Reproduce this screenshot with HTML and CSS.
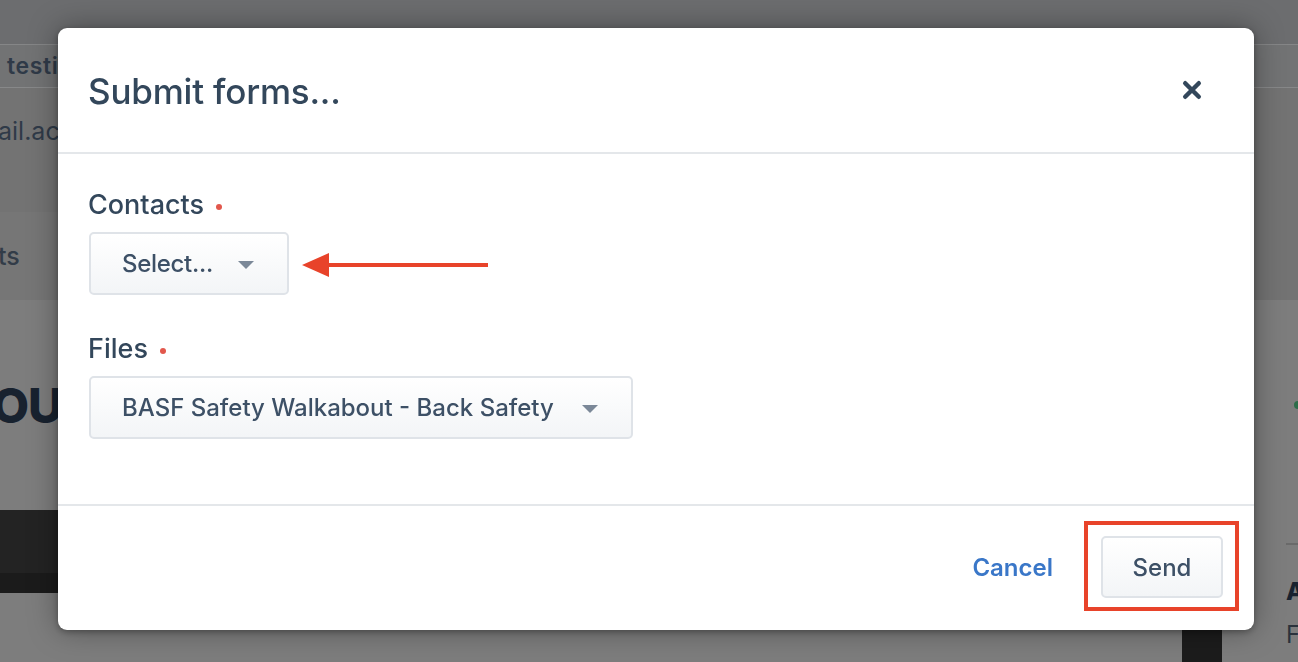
FILE: index.html
```html
<!DOCTYPE html>
<html lang="en">
<head>
<meta charset="utf-8">
<title>Submit forms</title>
<link rel="stylesheet" href="styles.css">
</head>
<body>
<div class="app">
  <div class="topbar"></div>
  <div class="tabs-row"><span class="tab-label">testing</span></div>
  <div class="info-row"><span class="info-text">ail.acme.com</span></div>
  <div class="nav-row"><div class="nav-tab">ts</div></div>
  <div class="content">
    <div class="content-head">
      <h1 class="page-title">OUT</h1>
      <span class="green-dot"></span>
    </div>
    <div class="dark-bar"></div>
    <div class="side-panel">
      <div class="side-rule"></div>
      <div class="side-title">A</div>
      <div class="side-text">F</div>
    </div>
    <div class="dark-block"></div>
  </div>
</div>

<div class="backdrop">
  <div class="modal">
    <div class="modal-header">
      <h2 class="modal-title">Submit forms...</h2>
      <button class="close-btn" aria-label="Close">
        <svg width="20" height="20" viewBox="0 0 20 20"><path d="M3.2 3.2 L16.8 16.8 M16.8 3.2 L3.2 16.8" stroke="#33475b" stroke-width="4.4" stroke-linecap="round" fill="none"/></svg>
      </button>
    </div>
    <div class="modal-body">
      <div class="field">
        <div class="field-label">Contacts<span class="req"></span></div>
        <button class="select-btn select-short">Select...<span class="caret"></span></button>
      </div>
      <div class="field">
        <div class="field-label">Files<span class="req"></span></div>
        <button class="select-btn">BASF Safety Walkabout - Back Safety<span class="caret"></span></button>
      </div>
    </div>
    <div class="modal-footer">
      <button class="link-btn">Cancel</button>
      <button class="send-btn">Send</button>
    </div>
  </div>
  <svg class="anno-arrow" width="188" height="26" viewBox="0 0 188 26"><path d="M0 13 L27 1 L27 11 L186 11 L186 15 L27 15 L27 25 Z" fill="#e8432a"/></svg>
  <div class="anno-box"></div>
</div>
</body>
</html>
```

FILE: styles.css
```css
* { box-sizing: border-box; }
html, body { margin: 0; padding: 0; }
body {
  width: 1298px;
  height: 662px;
  overflow: hidden;
  font-family: Inter, "Noto Sans", "Liberation Sans", sans-serif;
  background: #7b7b7b;
}

/* dimmed app page behind the modal */
.app { width: 1298px; height: 662px; display: flex; flex-direction: column; }
.topbar { height: 45px; background: #6c6d6f; border-bottom: 1px solid #858687; }
.tabs-row { height: 43px; background: #727374; border-bottom: 1px solid #878889; display: flex; align-items: center; padding-left: 7px; }
.tab-label { font-size: 23px; font-weight: 600; color: #2f3a48; letter-spacing: 0.6px; }
.info-row { height: 104px; background: #737373; display: flex; align-items: center; }
.info-text { font-size: 25px; color: #2f3a48; margin-left: -2px; margin-top: -18px; }
.nav-row { height: 108px; background: #737373; display: flex; align-items: flex-end; }
.nav-tab { height: 88px; width: 120px; background: #767676; border-right: 2px solid #7e7e7e; font-size: 25px; font-weight: 500; color: #323c48; display: flex; align-items: center; margin-left: -10px; padding-left: 8px; }
.content { flex: 1; background: #7d7d7d; display: flex; flex-direction: column; position: relative; }
.content-head { height: 210px; display: flex; align-items: center; justify-content: space-between; }
.page-title { margin: 0 0 0 -8px; font-size: 48px; font-weight: 800; color: #18222f; letter-spacing: -1px; }
.green-dot { width: 8px; height: 8px; border-radius: 50%; background: #2e6d4a; margin-right: -4px; }
.dark-bar { height: 83px; width: 1100px; background: #232323; border-bottom: 20px solid #1b1b1b; }
.side-panel { position: absolute; left: 1286px; top: 243px; width: 60px; }
.side-rule { height: 2px; background: #6a6a6a; }
.side-title { margin-top: 32px; font-size: 24px; font-weight: 800; color: #18222f; }
.side-text { margin-top: 14px; font-size: 24px; color: #2a323c; }
.dark-block { position: absolute; left: 1182px; top: 330px; width: 40px; height: 40px; background: #1c1c1c; }

/* modal overlay */
.backdrop {
  position: fixed;
  inset: 0;
  padding: 28px 0 0 58px;
}
.modal {
  width: 1196px;
  height: 602px;
  background: #fff;
  border-radius: 9px;
  box-shadow: 0 0 30px rgba(0,0,0,0.35), 0 2px 6px rgba(0,0,0,0.3);
  display: flex;
  flex-direction: column;
  color: #33475b;
}
.modal-header {
  height: 126px;
  border-bottom: 2px solid #e4e7ea;
  display: flex;
  align-items: center;
  justify-content: space-between;
  padding: 0 52px 0 30px;
}
.modal-title { margin: 0; font-size: 35px; font-weight: 500; letter-spacing: -0.2px; padding-top: 2px; }
.close-btn { border: 0; background: none; padding: 0; width: 20px; height: 20px; display: flex; margin-top: 0; }
.modal-body {
  flex: 1;
  padding: 34px 30px 0 30px;
  display: flex;
  flex-direction: column;
  align-items: flex-start;
  gap: 37px;
  border-bottom: 2px solid #e4e7ea;
}
.field { display: flex; flex-direction: column; align-items: flex-start; gap: 10px; }
.field-label { font-size: 27px; font-weight: 500; line-height: 34px; display: flex; align-items: center; }
.req { width: 6px; height: 6px; border-radius: 50%; background: #e2574c; margin-left: 12px; margin-top: 4px; }
.select-btn {
  height: 63px;
  padding: 0 33px 0 31px;
  border: 2px solid #dfe3e8;
  border-radius: 5px;
  background: linear-gradient(#ffffff, #f3f5f7);
  font-family: inherit;
  font-size: 24px;
  font-weight: 500;
  color: #3d5066;
  display: flex;
  align-items: center;
  gap: 28px;
  margin-left: 1px;
}
.select-short { padding-right: 33px; gap: 25px; letter-spacing: -0.3px; }
.caret { width: 0; height: 0; border-left: 8px solid transparent; border-right: 8px solid transparent; border-top: 8px solid #7b8898; margin-top: 2px; }
.modal-footer {
  height: 124px;
  display: flex;
  align-items: center;
  justify-content: flex-end;
  padding: 0 31px 2px 0;
  gap: 48px;
}
.link-btn { border: 0; background: none; padding: 0; font-family: inherit; font-size: 24px; font-weight: 600; color: #3a77c8; }
.send-btn {
  width: 122px;
  height: 62px;
  border: 2px solid #dfe3e8;
  border-radius: 5px;
  background: linear-gradient(#ffffff, #f3f5f7);
  font-family: inherit;
  font-size: 24px;
  font-weight: 500;
  color: #3d5066;
}

/* annotations */
.anno-arrow { position: absolute; left: 302px; top: 252px; }
.anno-box { position: absolute; left: 1084px; top: 521px; width: 155px; height: 90px; border: 4px solid #e8432a; }
```
